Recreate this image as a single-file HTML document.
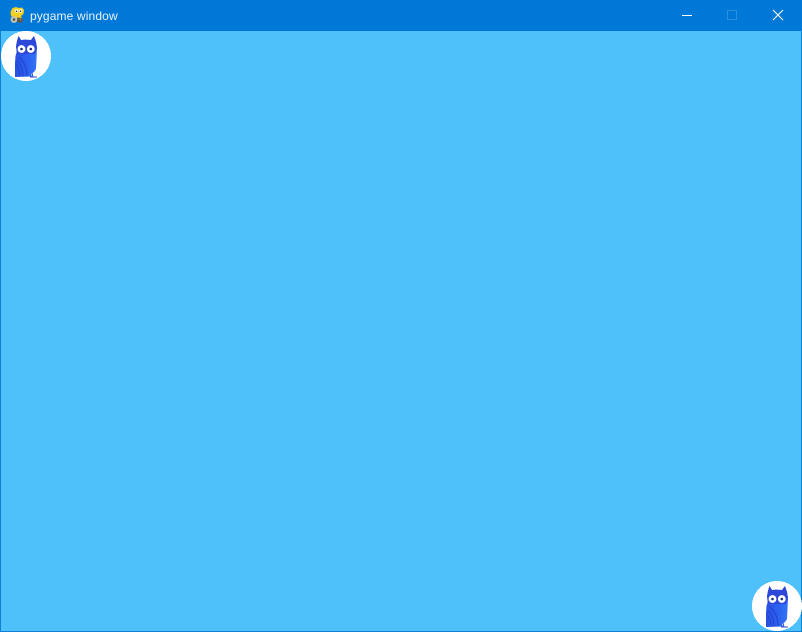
<!DOCTYPE html>
<html>
<head>
<meta charset="utf-8">
<style>
html,body{margin:0;padding:0;width:802px;height:632px;overflow:hidden;background:#4fc1fa}
#win{position:absolute;left:0;top:0;width:802px;height:632px;overflow:hidden;background:#4fc1fa}
#tb{position:absolute;left:0;top:0;width:802px;height:31px;background:#0078d7}
#title{position:absolute;left:30px;top:8px;font:12px/16px "Liberation Sans",sans-serif;letter-spacing:.13px;color:#e8f3fc;white-space:nowrap}
.b{position:absolute;background:#0f80da}
svg{position:absolute;overflow:visible}
</style>
</head>
<body>
<div id="win">
<div id="tb"></div>
<div class="b" style="left:0;top:31px;width:1px;height:601px"></div>
<div class="b" style="left:801px;top:31px;width:1px;height:601px"></div>
<div class="b" style="left:0;top:631px;width:802px;height:1px"></div>

<svg style="left:9px;top:7px" width="17" height="17" viewBox="0 0 17 17">
<path d="M3.5 1 L7 0 L10 1 L13 .5 L15 3 L14.5 7 L12 9 L13 11 L9 11.5 L5 10 L2 9 L1.5 5 Z" fill="#f4d020"/>
<path d="M2 8.5 L8 10 L7 11.5 L3 10.5 Z" fill="#d9a818"/>
<circle cx="7.5" cy="4" r="1.7" fill="#fff"/><circle cx="11.5" cy="4" r="1.7" fill="#fff"/>
<circle cx="7.5" cy="4.2" r=".8" fill="#333"/><circle cx="11.5" cy="4.2" r=".8" fill="#333"/>
<circle cx="5" cy="12.5" r="3.4" fill="#c8c4b4"/><circle cx="5" cy="12.5" r="1.3" fill="#55524a"/>
<path d="M8.5 10.5 L13.5 11 L14 14.5 L10.5 16 L8 14.5 Z" fill="#5b574d"/>
<path d="M10 11.5 L12.5 12 L11.5 14 Z" fill="#a08a50"/>
</svg>
<div id="title">pygame window</div>

<div style="position:absolute;left:682px;top:15px;width:10px;height:1px;background:#fff"></div>
<div style="position:absolute;left:727px;top:10px;width:8px;height:8px;border:1px solid #2b8fdf"></div>
<svg style="left:772px;top:9px" width="12" height="12" viewBox="0 0 12 12"><path d="M1 1 L11 11 M11 1 L1 11" stroke="#fff" stroke-width="1.1" fill="none"/></svg>

<svg style="left:1px;top:31px" width="50" height="50" viewBox="0 0 50 50">
<defs>
<linearGradient id="g" x1="0" y1="0" x2="1" y2="0">
<stop offset="0" stop-color="#2850e0"/><stop offset=".6" stop-color="#2c62f0"/><stop offset="1" stop-color="#3474f6"/>
</linearGradient>
</defs>
<circle cx="25" cy="25" r="25" fill="#fff" shape-rendering="crispEdges"/>
<path d="M17.5 5 L20 9 L24 8.5 L30 9 L33 5 L35 11 L36 17 L35.5 28 L35 38 L33 41 L30 43 L31 45.5 L14 46 L14 32 L14.5 25 L16 20 L15 15 L16 10 Z" fill="url(#g)"/>
<path d="M16 10 L17.5 5 L20 9 L30 9 L33 5 L35 11 L36 17 L34 23 L16 23 L15 16 Z" fill="#2d48d8"/>
<circle cx="20.5" cy="18" r="3.9" fill="#fff"/><circle cx="29.8" cy="18" r="3.9" fill="#fff"/>
<circle cx="20.5" cy="18" r="1.3" fill="#1c2c78"/><circle cx="29.8" cy="18" r="1.3" fill="#1c2c78"/>
<path d="M18 26 Q26 33 26 45 M16 30 Q22 35 22 45 M15 34 Q19 38 19 45" stroke="#2242cc" stroke-width="1" fill="none"/>
<path d="M31 42 L32 46 M29 46 L36 46" stroke="#2f4cd0" stroke-width="1" fill="none"/>
</svg>
<svg style="left:751.5px;top:581px" width="50" height="50" viewBox="0 0 50 50">
<circle cx="25" cy="25" r="25" fill="#fff" shape-rendering="crispEdges"/>
<path d="M17.5 5 L20 9 L24 8.5 L30 9 L33 5 L35 11 L36 17 L35.5 28 L35 38 L33 41 L30 43 L31 45.5 L14 46 L14 32 L14.5 25 L16 20 L15 15 L16 10 Z" fill="url(#g)"/>
<path d="M16 10 L17.5 5 L20 9 L30 9 L33 5 L35 11 L36 17 L34 23 L16 23 L15 16 Z" fill="#2d48d8"/>
<circle cx="20.5" cy="18" r="3.9" fill="#fff"/><circle cx="29.8" cy="18" r="3.9" fill="#fff"/>
<circle cx="20.5" cy="18" r="1.3" fill="#1c2c78"/><circle cx="29.8" cy="18" r="1.3" fill="#1c2c78"/>
<path d="M18 26 Q26 33 26 45 M16 30 Q22 35 22 45 M15 34 Q19 38 19 45" stroke="#2242cc" stroke-width="1" fill="none"/>
<path d="M31 42 L32 46 M29 46 L36 46" stroke="#2f4cd0" stroke-width="1" fill="none"/>
</svg>
</div>
</body>
</html>
